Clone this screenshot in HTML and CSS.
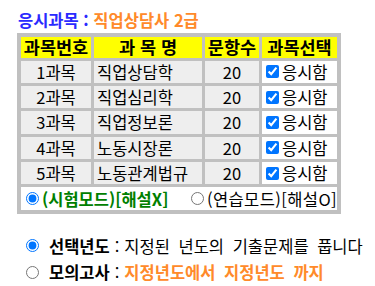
FILE: index.html
```html
<!DOCTYPE html>
<html lang="ko">
<head>
<meta charset="utf-8">
<title>응시과목</title>
<link rel="stylesheet" href="styles.css">
</head>
<body>
<div class="page">
  <h1 class="title"><span class="t-label">응시과목 :</span> <span class="t-name">직업상담사 2급</span></h1>
  <table class="subjects">
    <colgroup>
      <col class="w-no">
      <col class="w-name">
      <col class="w-cnt">
      <col class="w-sel">
    </colgroup>
    <thead>
      <tr><th>과목번호</th><th>과 목 명</th><th>문항수</th><th>과목선택</th></tr>
    </thead>
    <tbody>
      <tr><td class="c-no">1과목</td><td class="c-name">직업상담학</td><td class="c-cnt">20</td><td class="c-sel"><label class="sel"><input type="checkbox" checked>응시함</label></td></tr>
      <tr><td class="c-no">2과목</td><td class="c-name">직업심리학</td><td class="c-cnt">20</td><td class="c-sel"><label class="sel"><input type="checkbox" checked>응시함</label></td></tr>
      <tr><td class="c-no">3과목</td><td class="c-name">직업정보론</td><td class="c-cnt">20</td><td class="c-sel"><label class="sel"><input type="checkbox" checked>응시함</label></td></tr>
      <tr><td class="c-no">4과목</td><td class="c-name">노동시장론</td><td class="c-cnt">20</td><td class="c-sel"><label class="sel"><input type="checkbox" checked>응시함</label></td></tr>
      <tr><td class="c-no">5과목</td><td class="c-name">노동관계법규</td><td class="c-cnt">20</td><td class="c-sel"><label class="sel"><input type="checkbox" checked>응시함</label></td></tr>
      <tr class="mode-row">
        <td colspan="4">
          <div class="modes">
            <label class="mode mode-exam"><input type="radio" name="mode" checked><span>(시험모드)[해설X]</span></label>
            <label class="mode mode-practice"><input type="radio" name="mode"><span>(연습모드)[해설O]</span></label>
          </div>
        </td>
      </tr>
    </tbody>
  </table>
  <div class="options">
    <label class="opt"><input type="radio" name="kind" checked><b class="opt-name">선택년도</b><span class="sep">:</span><span class="opt-text">지정된 년도의 기출문제를 풉니다</span></label>
    <label class="opt"><input type="radio" name="kind"><b class="opt-name">모의고사</b><span class="sep">:</span><b class="opt-text orange">지정년도에서 지정년도 까지</b></label>
  </div>
</div>
</body>
</html>
```

FILE: styles.css
```css
html, body {
  margin: 0;
  padding: 0;
  background: #ffffff;
}

body {
  font-family: "Noto Sans CJK KR", "Noto Sans", sans-serif;
  font-size: 16.5px;
  color: #000000;
}

.page {
  padding: 10px 0 0 17px;
}

.title {
  margin: 0 0 3px 1px;
  font-size: 16.5px;
  font-weight: bold;
  line-height: 20px;
}

.t-label {
  color: #2a2aff;
}

.t-name,
.orange {
  color: #ff8a2a;
}

.subjects {
  border-collapse: separate;
  border-spacing: 3px;
  border: 1px solid #c0c0c0;
  background: #c0c0c0;
  table-layout: fixed;
  width: 324px;
}

.w-no { width: 70px; }
.w-name { width: 108px; }
.w-cnt { width: 54px; }
.w-sel { width: 75px; }

.subjects th {
  background: #ffff00;
  height: 20.67px;
  padding: 0;
  font-size: 17.5px;
  font-weight: bold;
  line-height: 20px;
  text-align: center;
  white-space: nowrap;
}

.subjects td {
  height: 22.33px;
  padding: 0;
  line-height: 22px;
  background: #eeeeee;
  white-space: nowrap;
}

.c-no,
.c-cnt {
  text-align: center;
}

.subjects td.c-name {
  padding-left: 3px;
}

.subjects td.c-sel {
  background: #ffffff;
}

.sel {
  display: flex;
  align-items: center;
}

.sel input {
  width: 13px;
  height: 13px;
  margin: 0 3px 0 4px;
}

.subjects .mode-row td {
  background: #ffffff;
  height: 23px;
}

.modes {
  display: flex;
  align-items: center;
}

.mode {
  display: flex;
  align-items: center;
}

.mode input {
  width: 13px;
  height: 13px;
  margin: 0 3px 0 5px;
}

.mode-exam {
  width: 167px;
  color: #008000;
  font-weight: bold;
}

.mode-practice {
  letter-spacing: 0.4px;
}

.options {
  margin-top: 18px;
  padding-left: 4px;
}

.opt {
  display: flex;
  align-items: center;
  height: 26.67px;
  white-space: nowrap;
}

.opt input {
  width: 13px;
  height: 13px;
  margin: 0 10px 0 5px;
}

.sep {
  margin: 0 5px 0 5px;
}

.opt-text {
  word-spacing: 4px;
}
```
